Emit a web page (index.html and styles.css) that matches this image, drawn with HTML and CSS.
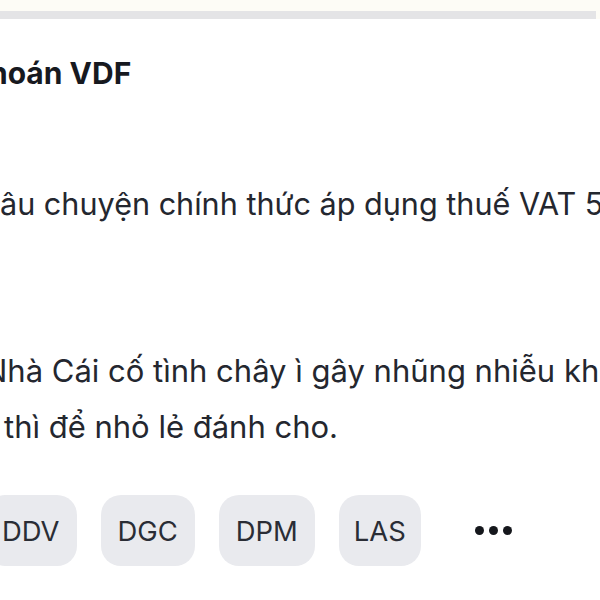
FILE: index.html
```html
<!DOCTYPE html>
<html lang="vi">
<head>
<meta charset="utf-8">
<title>VDF</title>
<link rel="stylesheet" href="styles.css">
</head>
<body>
<div class="top-strip"><div class="bar"></div></div>
<main class="post">
  <h2 class="title">hoán VDF</h2>
  <p class="lead">âu chuyện chính thức áp dụng thuế VAT 5</p>
  <p class="body">
    <span class="line line-cut">Nhà Cái cố tình chây ì gây nhũng nhiễu kh</span>
    <span class="line line-wrap">thì để nhỏ lẻ đánh cho.</span>
  </p>
  <div class="tags">
    <span class="tag tag-first">DDV</span>
    <span class="tag">DGC</span>
    <span class="tag">DPM</span>
    <span class="tag tag-narrow">LAS</span>
    <span class="more"><i></i><i></i><i></i></span>
  </div>
</main>
</body>
</html>
```
FILE: styles.css
```css
html, body {
  margin: 0;
  padding: 0;
  background: #ffffff;
  width: 600px;
  height: 600px;
  overflow: hidden;
}
body {
  font-family: Inter, "Noto Sans", "Liberation Sans", sans-serif;
  color: #24272f;
}
.top-strip {
  background: #fdfcf6;
  padding-top: 11px;
}
.bar {
  width: 596px;
  height: 8px;
  background: #e4e4e6;
}
.post {
  background: #ffffff;
}
.title {
  margin: 26px 0 0 -11px;
  font-size: 30px;
  line-height: 56px;
  font-weight: 700;
  color: #17191f;
  white-space: nowrap;
}
.lead {
  margin: 75px 0 0 0;
  font-size: 30.6px;
  line-height: 56px;
  white-space: nowrap;
}
.body {
  margin: 111px 0 0 0;
  font-size: 31px;
  line-height: 56px;
  display: flex;
  flex-direction: column;
}
.line {
  white-space: nowrap;
}
.line-cut {
  margin-left: -16px;
}
.line-wrap {
  margin-left: 4px;
}
.tags {
  margin: 40px 0 0 -15px;
  display: flex;
  align-items: center;
  gap: 24px;
}
.tag {
  height: 71px;
  padding: 0 17px;
  display: flex;
  align-items: center;
  border-radius: 20px;
  background: #e9eaee;
  font-size: 27.4px;
  color: #2a2d35;
}
.tag-narrow {
  padding: 0 15px;
}
.more {
  margin-left: 30px;
  display: flex;
  gap: 5px;
  align-items: center;
}
.more i {
  width: 9px;
  height: 9px;
  border-radius: 50%;
  background: #15171c;
}
```
